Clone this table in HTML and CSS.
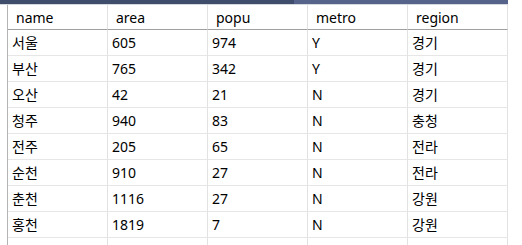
FILE: index.html
```html
<!DOCTYPE html>
<html lang="ko">
<head>
<meta charset="utf-8">
<link rel="stylesheet" href="styles.css">
</head>
<body>
<div class="topbar"><div class="bar-dark"></div><div class="bar-light"></div></div>
<div class="sheet">
  <div class="grid">
    <div class="hd">name</div><div class="hd">area</div><div class="hd">popu</div><div class="hd">metro</div><div class="hd">region</div>
    <div class="c">서울</div><div class="c">605</div><div class="c">974</div><div class="c">Y</div><div class="c">경기</div>
    <div class="c">부산</div><div class="c">765</div><div class="c">342</div><div class="c">Y</div><div class="c">경기</div>
    <div class="c">오산</div><div class="c">42</div><div class="c">21</div><div class="c">N</div><div class="c">경기</div>
    <div class="c">청주</div><div class="c">940</div><div class="c">83</div><div class="c">N</div><div class="c">충청</div>
    <div class="c">전주</div><div class="c">205</div><div class="c">65</div><div class="c">N</div><div class="c">전라</div>
    <div class="c">순천</div><div class="c">910</div><div class="c">27</div><div class="c">N</div><div class="c">전라</div>
    <div class="c">춘천</div><div class="c">1116</div><div class="c">27</div><div class="c">N</div><div class="c">강원</div>
    <div class="c">홍천</div><div class="c">1819</div><div class="c">7</div><div class="c">N</div><div class="c">강원</div>
    <div class="e"></div><div class="e"></div><div class="e"></div><div class="e"></div><div class="e"></div>
  </div>
</div>
</body>
</html>
```

FILE: styles.css
```css
html, body {
  margin: 0;
  padding: 0;
  background: #ffffff;
  height: 245px;
  overflow: hidden;
}
body {
  font-family: "Noto Sans", "Noto Sans CJK KR", sans-serif;
  font-size: 14px;
  color: #000;
}
.topbar {
  display: flex;
  width: 508px;
  height: 5px;
  box-sizing: border-box;
  border-bottom: 1px solid #d6d9df;
}
.bar-dark {
  width: 294px;
  background: #3f4c6c;
}
.bar-light {
  flex: 1;
  background: #56638a;
}
.sheet {
  padding-left: 7px;
}
.grid {
  display: grid;
  grid-template-columns: repeat(5, 100px);
  grid-template-rows: 25px repeat(8, 26px) 8px;
  border-left: 1px solid #b4b4b4;
  width: 501px;
  box-sizing: border-box;
}
.hd, .c, .e {
  box-sizing: border-box;
  border-right: 1px solid #e2e2e2;
}
.hd {
  border-bottom: 1px solid #a0a0a0;
  padding: 1px 0 0 8px;
  line-height: 23px;
}
.c {
  border-bottom: 1px solid #e6e6e6;
  padding: 1px 0 0 4px;
  line-height: 24px;
}
```
